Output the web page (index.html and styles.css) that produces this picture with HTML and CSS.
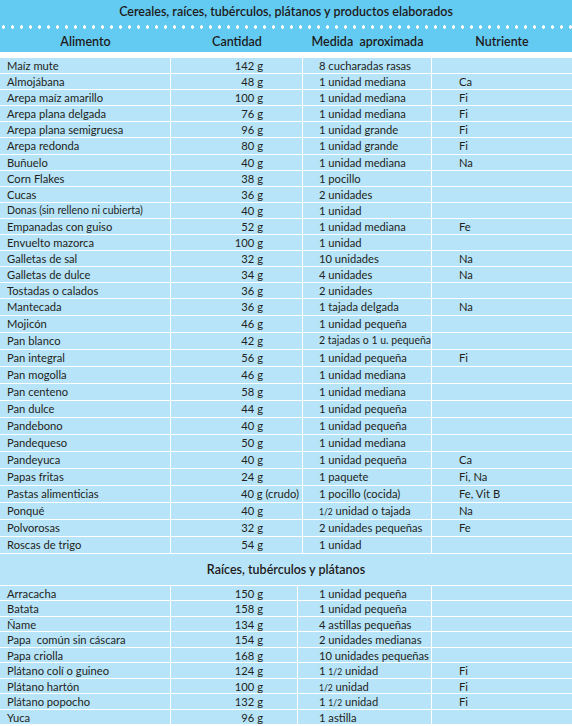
FILE: index.html
```html
<!DOCTYPE html>
<html lang="es">
<head>
<meta charset="utf-8">
<title>Cereales, raíces, tubérculos, plátanos y productos elaborados</title>
<link rel="stylesheet" href="styles.css">
</head>
<body>
<div class="page">
  <div class="head">
    <div class="title">Cereales, raíces, tubérculos, plátanos y productos elaborados</div>
    <div class="dots"></div>
    <div class="colheads">
      <div>Alimento</div>
      <div>Cantidad</div>
      <div>Medida&nbsp; aproximada</div>
      <div>Nutriente</div>
    </div>
  </div>

  <div class="grid sec1">
    <div class="c1">Maíz mute</div><div class="c2">142 g</div><div class="c3">8 cucharadas rasas</div><div class="c4"></div>
    <div class="c1">Almojábana</div><div class="c2">48 g</div><div class="c3">1 unidad mediana</div><div class="c4">Ca</div>
    <div class="c1">Arepa maíz amarillo</div><div class="c2">100 g</div><div class="c3">1 unidad mediana</div><div class="c4">Fi</div>
    <div class="c1">Arepa plana delgada</div><div class="c2">76 g</div><div class="c3">1 unidad mediana</div><div class="c4">Fi</div>
    <div class="c1">Arepa plana semigruesa</div><div class="c2">96 g</div><div class="c3">1 unidad grande</div><div class="c4">Fi</div>
    <div class="c1">Arepa redonda</div><div class="c2">80 g</div><div class="c3">1 unidad grande</div><div class="c4">Fi</div>
    <div class="c1">Buñuelo</div><div class="c2">40 g</div><div class="c3">1 unidad mediana</div><div class="c4">Na</div>
    <div class="c1">Corn Flakes</div><div class="c2">38 g</div><div class="c3">1 pocillo</div><div class="c4"></div>
    <div class="c1">Cucas</div><div class="c2">36 g</div><div class="c3">2 unidades</div><div class="c4"></div>
    <div class="c1 small">Donas (sin relleno ni cubierta)</div><div class="c2">40 g</div><div class="c3">1 unidad</div><div class="c4"></div>
    <div class="c1">Empanadas con guiso</div><div class="c2">52 g</div><div class="c3">1 unidad mediana</div><div class="c4">Fe</div>
    <div class="c1">Envuelto mazorca</div><div class="c2">100 g</div><div class="c3">1 unidad</div><div class="c4"></div>
    <div class="c1">Galletas de sal</div><div class="c2">32 g</div><div class="c3">10 unidades</div><div class="c4">Na</div>
    <div class="c1">Galletas de dulce</div><div class="c2">34 g</div><div class="c3">4 unidades</div><div class="c4">Na</div>
    <div class="c1">Tostadas o calados</div><div class="c2">36 g</div><div class="c3">2 unidades</div><div class="c4"></div>
    <div class="c1">Mantecada</div><div class="c2">36 g</div><div class="c3">1 tajada delgada</div><div class="c4">Na</div>
    <div class="c1">Mojicón</div><div class="c2">46 g</div><div class="c3">1 unidad pequeña</div><div class="c4"></div>
    <div class="c1">Pan blanco</div><div class="c2">42 g</div><div class="c3 small">2 tajadas o 1 u. pequeña</div><div class="c4"></div>
    <div class="c1">Pan integral</div><div class="c2">56 g</div><div class="c3">1 unidad pequeña</div><div class="c4">Fi</div>
    <div class="c1">Pan mogolla</div><div class="c2">46 g</div><div class="c3">1 unidad mediana</div><div class="c4"></div>
    <div class="c1">Pan centeno</div><div class="c2">58 g</div><div class="c3">1 unidad mediana</div><div class="c4"></div>
    <div class="c1">Pan dulce</div><div class="c2">44 g</div><div class="c3">1 unidad pequeña</div><div class="c4"></div>
    <div class="c1">Pandebono</div><div class="c2">40 g</div><div class="c3">1 unidad pequeña</div><div class="c4"></div>
    <div class="c1">Pandequeso</div><div class="c2">50 g</div><div class="c3">1 unidad mediana</div><div class="c4"></div>
    <div class="c1">Pandeyuca</div><div class="c2">40 g</div><div class="c3">1 unidad pequeña</div><div class="c4">Ca</div>
    <div class="c1">Papas fritas</div><div class="c2">24 g</div><div class="c3">1 paquete</div><div class="c4">Fi, Na</div>
    <div class="c1">Pastas alimenticias</div><div class="c2">40 g<span class="extra"> (crudo)</span></div><div class="c3">1 pocillo (cocida)</div><div class="c4">Fe, Vit B</div>
    <div class="c1">Ponqué</div><div class="c2">40 g</div><div class="c3"><span class="frac">1/2</span> unidad o tajada</div><div class="c4">Na</div>
    <div class="c1">Polvorosas</div><div class="c2">32 g</div><div class="c3">2 unidades pequeñas</div><div class="c4">Fe</div>
    <div class="c1">Roscas de trigo</div><div class="c2">54 g</div><div class="c3">1 unidad</div><div class="c4"></div>
  </div>

  <div class="subhead">Raíces, tubérculos y plátanos</div>

  <div class="grid sec2">
    <div class="c1">Arracacha</div><div class="c2">150 g</div><div class="c3">1 unidad pequeña</div><div class="c4"></div>
    <div class="c1">Batata</div><div class="c2">158 g</div><div class="c3">1 unidad pequeña</div><div class="c4"></div>
    <div class="c1">Ñame</div><div class="c2">134 g</div><div class="c3">4 astillas pequeñas</div><div class="c4"></div>
    <div class="c1">Papa&nbsp; común sin cáscara</div><div class="c2">154 g</div><div class="c3">2 unidades medianas</div><div class="c4"></div>
    <div class="c1">Papa criolla</div><div class="c2">168 g</div><div class="c3">10 unidades pequeñas</div><div class="c4"></div>
    <div class="c1">Plátano colí o guineo</div><div class="c2">124 g</div><div class="c3">1 <span class="frac">1/2</span> unidad</div><div class="c4">Fi</div>
    <div class="c1">Plátano hartón</div><div class="c2">100 g</div><div class="c3"><span class="frac">1/2</span> unidad</div><div class="c4">Fi</div>
    <div class="c1">Plátano popocho</div><div class="c2">132 g</div><div class="c3">1 <span class="frac">1/2</span> unidad</div><div class="c4">Fi</div>
    <div class="c1">Yuca</div><div class="c2">96 g</div><div class="c3">1 astilla</div><div class="c4"></div>
  </div>
</div>
</body>
</html>
```
FILE: styles.css
```css
html, body {
  margin: 0;
  padding: 0;
  background: #ffffff;
}
body {
  font-family: Lato, "Open Sans", "DejaVu Sans", sans-serif;
  color: #231f20;
}
.page {
  width: 572px;
  overflow: hidden;
}
.head {
  background: #63cbf2;
  height: 52px;
  margin-bottom: 6px;
}
.title {
  height: 23px;
  line-height: 24px;
  text-align: center;
  font-size: 12.5px;
  font-weight: 600;
  color: #1e1a1b;
}
.dots {
  height: 8px;
  background-image: radial-gradient(circle, #ffffff 1.5px, transparent 1.9px);
  background-size: 9px 8px;
  background-position: -1px 0;
  background-repeat: repeat-x;
}
.colheads {
  display: grid;
  grid-template-columns: 171px 132px 129px 140px;
  height: 21px;
  line-height: 21px;
  font-size: 12.5px;
  font-weight: 600;
  color: #1e1a1b;
  text-align: center;
}
.grid {
  display: grid;
  gap: 1px;
  background: #ffffff;
  font-size: 11.2px;
}
.grid > div {
  background: #b7e4f9;
  white-space: nowrap;
  line-height: 15.6px;
}
.sec1 {
  grid-template-columns: 170px 131px 128px 1fr;
  grid-template-rows: repeat(16, 15.1px) repeat(14, 16px);
}
.sec2 {
  grid-template-columns: 170px 126px 133px 1fr;
  grid-auto-rows: 14.5px;
  margin-top: 1px;
}
.sec2 > div {
  line-height: 15px;
}
.c1 {
  padding-left: 7px;
}
.c2 {
  text-align: right;
  padding-right: 39px;
}
.sec2 > .c2 {
  padding-right: 34px;
}
.c3 {
  padding-left: 16px;
}
.sec2 > .c3 {
  padding-left: 21px;
}
.c4 {
  padding-left: 27px;
}
.grid > .small {
  font-size: 10.5px;
}
.extra {
  margin-right: -36px;
}
.frac {
  font-size: 8.5px;
}
.subhead {
  margin-top: 1px;
  height: 31px;
  line-height: 31px;
  background: #b7e4f9;
  text-align: center;
  font-size: 12.5px;
  font-weight: 600;
  color: #1e1a1b;
}
```
